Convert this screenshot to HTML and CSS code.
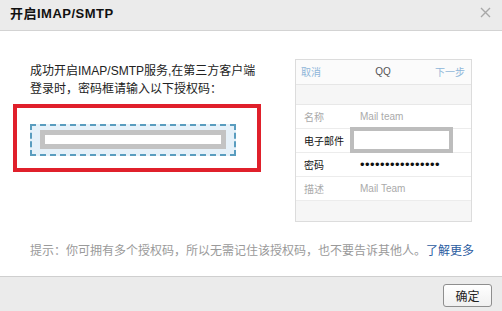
FILE: index.html
```html
<!DOCTYPE html>
<html lang="zh-CN">
<head>
<meta charset="utf-8">
<title>开启IMAP/SMTP</title>
<link rel="stylesheet" href="styles.css">
</head>
<body>
<div class="dialog">
  <header class="hd">
    <h1 class="title">开启IMAP/SMTP</h1>
    <svg class="close" width="11" height="11" viewBox="0 0 11 11"><path d="M1 1L10 10M10 1L1 10" stroke="#a8a8a8" stroke-width="1.4" fill="none"/></svg>
  </header>
  <main class="bd">
    <div class="cols">
      <div class="left">
        <p class="intro">成功开启IMAP/SMTP服务,在第三方客户端<br>登录时，密码框请输入以下授权码：</p>
        <div class="hl">
          <div class="dash"><div class="bar"></div></div>
        </div>
      </div>
      <div class="phone">
        <div class="nav"><span class="nav-l">取消</span><span class="nav-c">QQ</span><span class="nav-r">下一步</span></div>
        <div class="gap"></div>
        <div class="rows">
          <div class="row"><span class="lb dim">名称</span><span class="val dim">Mail team</span></div>
          <div class="row"><span class="lb">电子邮件</span><span class="mask"></span></div>
          <div class="row"><span class="lb">密码</span><span class="val dots">••••••••••••••••</span></div>
          <div class="row"><span class="lb dim">描述</span><span class="val dim">Mail Team</span></div>
        </div>
        <div class="gap2"></div>
      </div>
    </div>
    <p class="tip">提示：你可拥有多个授权码，所以无需记住该授权码，也不要告诉其他人。<a class="more">了解更多</a></p>
  </main>
  <footer class="ft"><button class="ok">确定</button></footer>
</div>
</body>
</html>
```
FILE: styles.css
```css
* { box-sizing: border-box; }
html, body { margin: 0; padding: 0; }
body {
  width: 502px;
  height: 311px;
  overflow: hidden;
  background: #fff;
  font-family: "Liberation Sans", "Noto Sans CJK SC", sans-serif;
  font-size: 12px;
  color: #333;
}
.dialog { width: 502px; height: 311px; display: flex; flex-direction: column; }
.hd {
  height: 31px;
  background: #ebebeb;
  border-bottom: 1px solid #d3d3d3;
  display: flex;
  align-items: center;
  justify-content: space-between;
  padding: 0 11px 5px 10px;
}
.title {
  margin: 0;
  font-size: 13px;
  font-weight: bold;
  letter-spacing: 0.5px;
  color: #111;
  font-family: "Liberation Sans", "Noto Sans CJK SC", sans-serif;
}
.bd { height: 245px; padding: 28px 0 0 13px; }
.cols { display: flex; align-items: flex-start; }
.left { width: 248px; padding-top: 3px; }
.intro {
  margin: 0;
  padding-left: 17px;
  line-height: 18px;
  color: #222;
  white-space: nowrap;
}
.hl {
  margin-top: 6px;
  height: 68px;
  border: 4px solid #e0202b;
  padding: 16px 0 0 13px;
}
.dash {
  width: 206px;
  height: 32px;
  border: 2px dashed #5a9dbf;
  background: #e6f1f9;
  padding: 4px 0 0 8px;
}
.bar {
  width: 186px;
  height: 19px;
  border: 5px solid #c3c3c3;
  background: #fff;
}
.phone {
  margin-left: 34px;
  width: 177px;
  height: 163px;
  border: 1px solid #dcdcdc;
  background: #f6f6f6;
  font-size: 10px;
  display: flex;
  flex-direction: column;
}
.nav {
  height: 25px;
  background: #fbfbfb;
  border-bottom: 1px solid #e6e6e6;
  display: flex;
  align-items: center;
  justify-content: space-between;
  padding: 0 6px 2px 5px;
  flex: none;
}
.nav-l, .nav-r { color: #8fb6d9; }
.nav-c { color: #555; margin-left: 10px; }
.gap { height: 20px; flex: none; border-bottom: 1px solid #e8e8e8; }
.rows { background: #fff; }
.row {
  height: 24px;
  display: flex;
  align-items: center;
  padding-left: 8px;
  position: relative;
  border-bottom: 1px solid #ececec;
}
.lb { width: 56px; color: #111; }
.dim { color: #aaa; }
.val { color: #aaa; }
.dots { color: #111; font-size: 13px; letter-spacing: 0.45px; font-family: "Liberation Sans", sans-serif; }
.mask {
  position: absolute;
  left: 54px;
  top: -2px;
  width: 103px;
  height: 26px;
  border: 4px solid #bdbdbd;
  background: #fff;
}
.gap2 { flex: 1; }
.tip {
  margin: 20px 0 0;
  padding-left: 17px;
  line-height: 18px;
  color: #9a9a9a;
  white-space: nowrap;
}
.more { color: #2b5c9f; text-decoration: none; }
.ft {
  flex: 1;
  background: #ebebeb;
  border-top: 1px solid #cfcfcf;
  display: flex;
  justify-content: flex-end;
  align-items: flex-start;
  padding: 7px 10px 0 0;
}
.ok {
  width: 49px;
  height: 23px;
  border: 1px solid #8e8e8e;
  border-radius: 3px;
  background: linear-gradient(#ffffff, #f0f0f0);
  font-family: "Noto Sans CJK SC", sans-serif;
  font-size: 12px;
  color: #222;
  padding: 0;
}
```
